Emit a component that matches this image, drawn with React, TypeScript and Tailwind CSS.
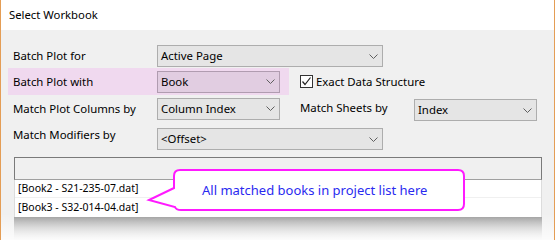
import React from "react";

const font = { fontFamily: '"Noto Sans", "Open Sans", sans-serif' };

function Chevron() {
  return (
    <svg width="9" height="5" viewBox="0 0 9 5" className="shrink-0">
      <polyline points="0.5,0.5 4.5,4.5 8.5,0.5" fill="none" stroke="#5f5f5f" strokeWidth="1" />
    </svg>
  );
}

function Combo({ text, w, pink }: { text: string; w: string; pink?: boolean }) {
  return (
    <div
      className={`${w} h-[22px] flex items-center justify-between pl-[3px] pr-[4px] border ${
        pink ? "bg-[#e1cde1] border-[#b09cb0]" : "bg-[#e5e5e5] border-[#adadad]"
      }`}
    >
      <span className="text-[11.4px] text-black leading-none">{text}</span>
      <Chevron />
    </div>
  );
}

export default function App() {
  return (
    <div
      className="relative w-[555px] h-[240px] overflow-hidden bg-[#f0f0f0] border-x border-[#e49d55] text-black text-[11.4px]"
      style={font}
    >
      <div className="h-[30px] bg-white flex items-center pl-[8px] text-[11.3px]">Select Workbook</div>

      <div className="pt-[15px]">
        {/* Row 1 */}
        <div className="flex items-center h-[22px] pl-[12px]">
          <div className="w-[144px]">Batch Plot for</div>
          <Combo text="Active Page" w="w-[226px]" />
        </div>

        {/* Row 2 */}
        <div className="flex items-center mt-[1px] h-[27px]">
          <div className="ml-[7px] w-[281px] h-[27px] bg-[#f0d9ef] flex items-center pl-[5px]">
            <div className="w-[144px]">Batch Plot with</div>
            <Combo text="Book" w="w-[123px]" pink />
          </div>
          <div className="ml-[11px] flex items-center gap-[3px]">
            <div className="w-[13px] h-[13px] border border-[#333333] bg-white flex items-center justify-center">
              <svg width="11" height="11" viewBox="0 0 11 11">
                <polyline points="1.5,5.5 4,8.5 9.5,1.5" fill="none" stroke="#222" strokeWidth="1.2" />
              </svg>
            </div>
            <span>Exact Data Structure</span>
          </div>
        </div>

        {/* Row 3 */}
        <div className="flex items-center mt-[2px] h-[23px] pl-[12px]">
          <div className="w-[144px]">Match Plot Columns by</div>
          <Combo text="Column Index" w="w-[123px]" />
          <div className="ml-[20px] w-[114px] -mt-[2px]">Match Sheets by</div>
          <div className="mt-[3px]">
            <Combo text="Index" w="w-[123px]" />
          </div>
        </div>

        {/* Row 4 */}
        <div className="flex items-start mt-[8px] h-[23px] pl-[12px]">
          <div className="w-[144px] -mt-[2px]">Match Modifiers by</div>
          <div className="h-[23px]">
            <Combo text="<Offset>" w="w-[226px]" />
          </div>
        </div>

        {/* List */}
        <div className="mt-[6px] ml-[13px] w-[528px]">
          <div className="h-[23px] border-t border-l border-r border-[#7a7a7a] border-b-[#a0a0a0] border-b bg-[#f0f0f0]" />
          <div className="bg-white border-r border-l border-[#dcdcdc]">
            <div className="h-[18px] flex items-center pl-[3px] text-[10.5px] border-b border-[#f0f0f0]">
              [Book2 - S21-235-07.dat]
            </div>
            <div className="h-[19px] flex items-center pl-[3px] text-[10.5px]">[Book3 - S32-014-04.dat]</div>
          </div>
          <div className="h-[24px] bg-gradient-to-b from-[#9c9c9c] to-[#f2f2f2]" />
        </div>
      </div>

      {/* bottom fade */}
      <div className="absolute left-0 right-0 bottom-0 h-[26px] bg-gradient-to-b from-transparent to-white/80 pointer-events-none" />

      {/* callout */}
      <svg className="absolute left-0 top-0 pointer-events-none" width="555" height="240">
        <path
          d="M 179 170 H 457 Q 463 170 463 176 V 204 Q 463 210 457 210 H 180 Q 175 210 174 207 L 148 200 L 173 188 V 176 Q 173 170 179 170 Z"
          fill="white"
          stroke="#ff1aff"
          strokeWidth="2"
        />
      </svg>
      <div className="absolute left-[201px] top-[181px] text-[13px] leading-[18px] text-[#2a2af0] whitespace-nowrap">
        All matched books in project list here
      </div>
    </div>
  );
}
